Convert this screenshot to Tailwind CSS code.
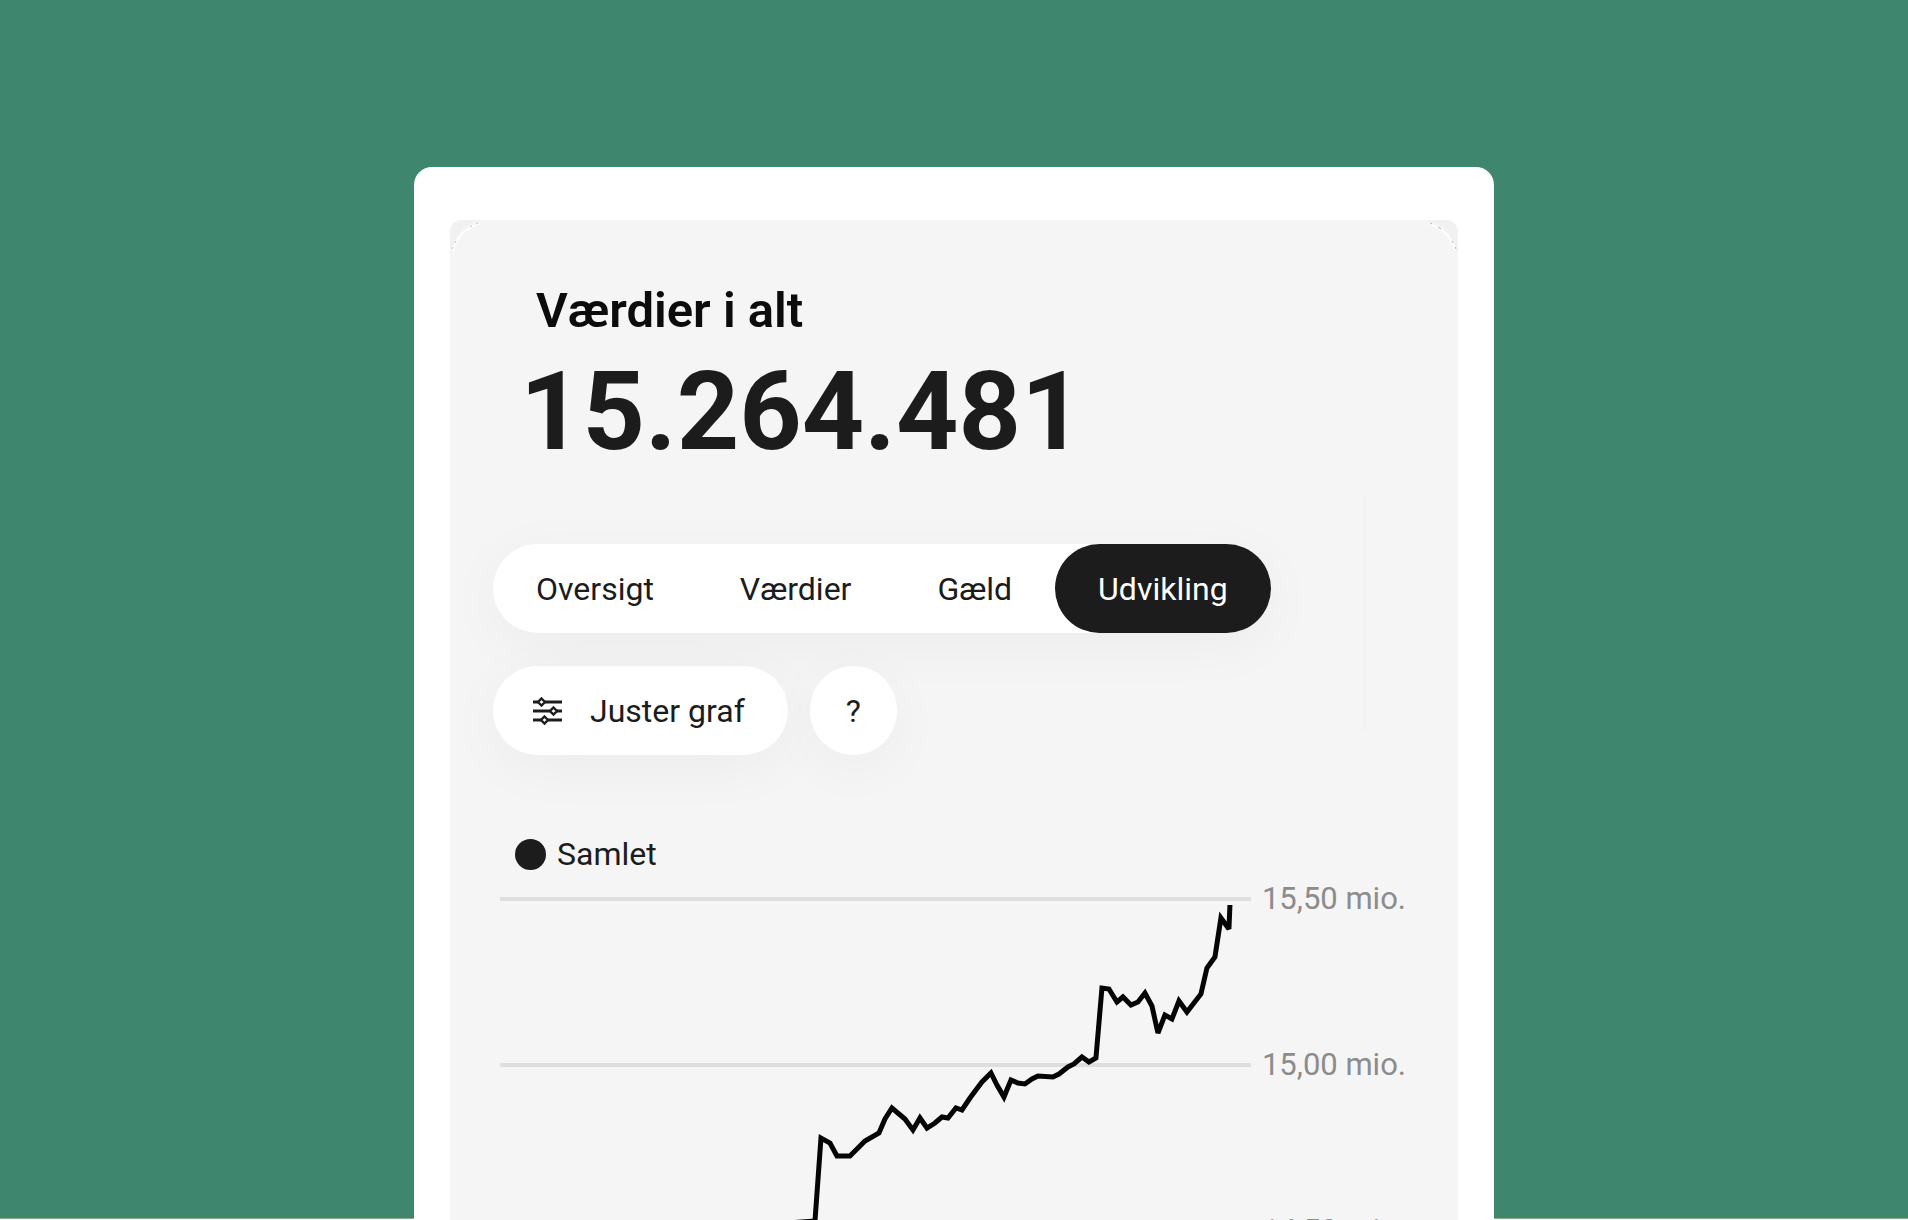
<!DOCTYPE html>
<html lang="da">
<head>
<meta charset="utf-8">
<meta name="viewport" content="width=device-width, initial-scale=1">
<title>Værdier i alt</title>
<script src="https://cdn.jsdelivr.net/npm/@tailwindcss/browser@4"></script>
</head>
<body class="font-['Roboto',sans-serif] text-[#1c1c1c]">
<main class="flex h-screen flex-col overflow-hidden bg-[linear-gradient(to_top,#ffffff_1px,#8bae88_1px,#8bae88_2px,#3e866d_2px)] pt-[167px]">
  <div class="mx-auto w-full max-w-[1080px] grow rounded-t-[18px] bg-white px-9 pt-[53px]">
    <article class="relative flex h-full flex-col rounded-t-xl bg-[#f5f5f5] pt-[61px]">
      <!-- Corner accents -->
      <svg class="absolute top-0 left-0 size-9" viewBox="0 0 36 36" fill="none" aria-hidden="true">
        <path d="M0 34V12A12 12 0 0 1 12 0H34C16 3 4 14 0 34Z" fill="#f1f1f1"/>
        <path d="M3 30C7 17 15 8 29 4" stroke="#fff" stroke-width="1.500"/>
        <path d="M2 29l1-2M5 23l1-2M20 7l2-1M26 4l2-1" stroke="#c4c4c4"/>
      </svg>
      <svg class="absolute top-0 right-0 size-9 -scale-x-100" viewBox="0 0 36 36" fill="none" aria-hidden="true">
        <path d="M0 34V12A12 12 0 0 1 12 0H34C16 3 4 14 0 34Z" fill="#f1f1f1"/>
        <path d="M3 30C7 17 15 8 29 4" stroke="#fff" stroke-width="1.500"/>
        <path d="M2 29l1-2M5 23l1-2M17 9l3-2M26 4l2-1" stroke="#b4b4b4"/>
      </svg>

      <h1 class="pl-[86px] text-[49px] leading-[60px] font-semibold text-[#0c0c0c]">Værdier i alt</h1>
      <p class="mt-[11px] pl-[70px] text-[109px] leading-[120px] font-bold">15.264.481</p>

      <section class="mt-[25px] flex justify-between pr-[92px] pl-[43px]">
        <div class="flex flex-col items-start gap-[33px] pt-[47px] text-[32px] leading-[40px]">
          <div role="tablist" class="flex h-[89px] rounded-full bg-white shadow-[0_12px_60px_rgba(0,0,0,0.04)]">
            <button role="tab" class="px-[43px]">Oversigt</button>
            <button role="tab" class="px-[43px]">Værdier</button>
            <button role="tab" class="px-[43px]">Gæld</button>
            <button role="tab" aria-selected="true" class="rounded-full bg-[#1c1c1c] px-[43px] text-white">Udvikling</button>
          </div>
          <div class="flex gap-[22px]">
            <button class="flex h-[89px] items-center gap-[28px] rounded-full bg-white pr-[43px] pl-[40px] shadow-[0_12px_60px_rgba(0,0,0,0.04)]">
              <svg class="h-[30px] w-[29px]" viewBox="0 0 29 30" fill="none" stroke="#1c1c1c" stroke-width="2.8" aria-hidden="true">
                <path d="M0 6h5M12 6h17M0 15h17M24 15h5M0 24h8M15 24h14"/>
                <path d="M8.500 2.500l3.500 3.500-3.500 3.500L5 6zM20.500 11.500l3.500 3.500-3.500 3.500-3.500-3.500zM11.500 20.500l3.500 3.500-3.500 3.500L8 24z" stroke-width="2.4"/>
              </svg>
              <span>Juster graf</span>
            </button>
            <button class="h-[89px] w-[87px] rounded-full bg-white shadow-[0_12px_60px_rgba(0,0,0,0.04)]">?</button>
          </div>
        </div>
        <div class="h-[233px] w-[2px] bg-[#f0f0f0]"></div>
      </section>

      <div class="mt-[79px] flex items-center gap-[11px] pl-[65px] text-[32px] leading-[40px]">
        <span class="size-[31px] rounded-full bg-[#1c1c1c]"></span>
        <span>Samlet</span>
      </div>

      <section class="flex gap-[11px] pr-[52px] pl-[50px]">
        <svg class="h-[360px] min-w-0 flex-1" viewBox="500 874 751 360" preserveAspectRatio="none" fill="none" role="img" aria-label="Samlet udvikling">
          <path d="M500 899H1251M500 1065H1251M500 1231H1251" stroke="#dedede" stroke-width="4"/>
          <polyline stroke="#050505" stroke-width="5" stroke-miterlimit="3" vector-effect="non-scaling-stroke" points="788,1223 815,1221 821,1138 830,1143 837,1156 850,1156 865,1141 879,1133 885,1119 892,1108 905,1119 913,1130 920,1118 927,1128 935,1123 942,1117 948,1118 956,1108 962,1110 970,1098 982,1082 991,1073 997,1085 1004,1097 1011,1080 1018,1083 1025,1084 1032,1079 1038,1076 1053,1077 1059,1074 1068,1067 1074,1064 1082,1057 1089,1062 1096,1058 1102,988 1109,989 1117,1002 1123,997 1131,1005 1138,1002 1145,993 1152,1006 1158,1033 1165,1015 1172,1019 1179,1001 1187,1012 1201,994 1207,968 1215,957 1221,918 1229,929 1230,905"/>
        </svg>
        <ul class="shrink-0 text-[31px] leading-[50px] text-[#8c8c8c]">
          <li class="h-[166px]">15,50 mio.</li>
          <li class="h-[166px]">15,00 mio.</li>
          <li class="h-[166px]">14,50 mio.</li>
        </ul>
      </section>
    </article>
  </div>
</main>
</body>
</html>
